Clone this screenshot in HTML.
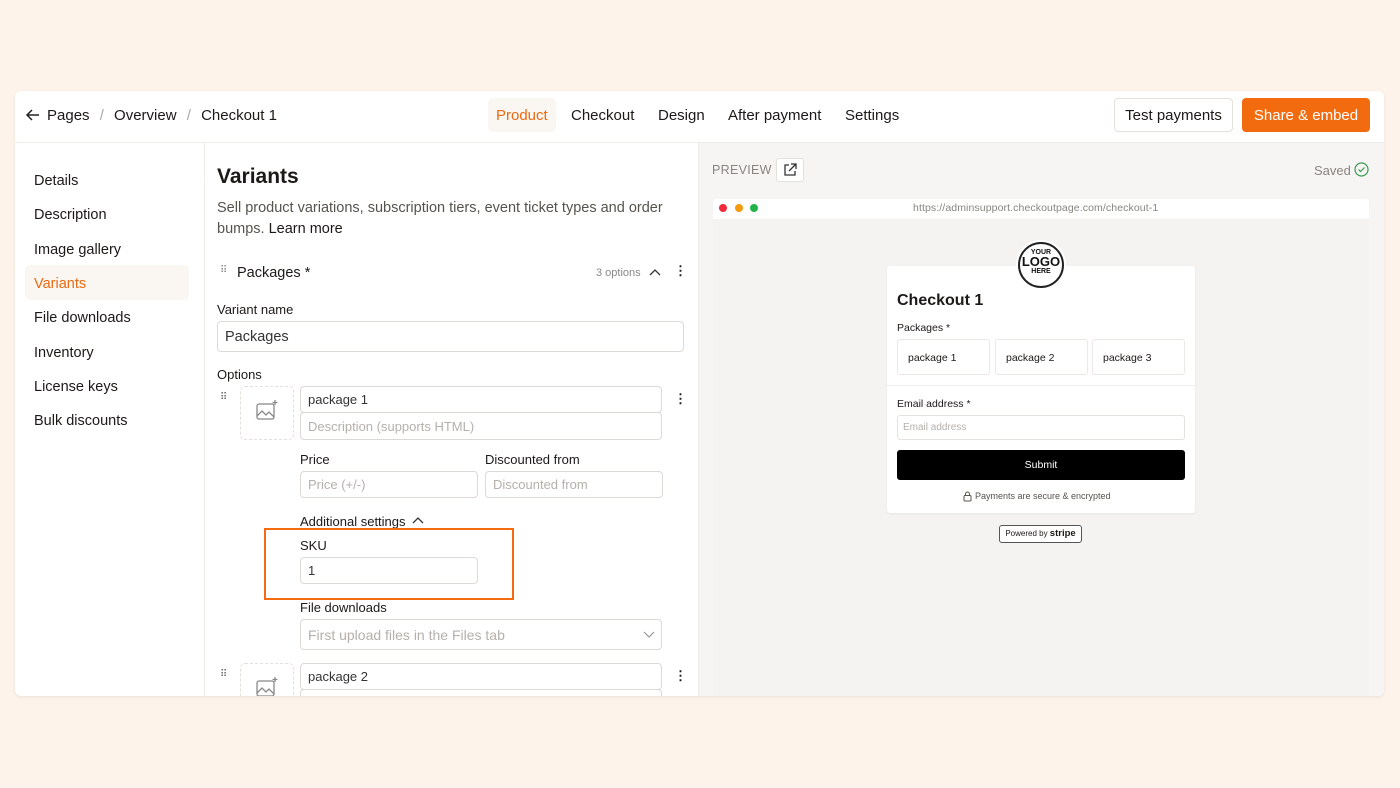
<!DOCTYPE html>
<html><head><meta charset="utf-8"><style>
*{box-sizing:border-box;margin:0;padding:0}
body{width:1400px;height:788px;background:#fdf3ea;font-family:"Liberation Sans",sans-serif;color:#1c1917;position:relative;overflow:hidden}
.a{position:absolute}
.card{left:15px;top:91px;width:1369px;height:605px;background:#fff;border-radius:6px;overflow:hidden;box-shadow:0 1px 3px rgba(0,0,0,.08)}
.t15{font-size:15px}
.inp{position:absolute;border:1px solid #ddd9d6;border-radius:4px;background:#fff;font-size:13px;color:#b5b0ac;padding-left:7px;display:flex;align-items:center}
.lbl{position:absolute;font-size:13px;color:#1c1917}
.side div{position:absolute;left:19px;font-size:14.5px}
</style></head><body>
<div class="a card">
 <div class="a" style="left:0;top:0;width:1369px;height:52px;border-bottom:1px solid #efece9"></div>
 <svg class="a" style="left:10px;top:16px" width="16" height="16" viewBox="0 0 16 16"><path d="M14 8H2M7 3L2 8l5 5" stroke="#222" stroke-width="1.5" fill="none"/></svg>
 <div class="a t15" style="left:32px;top:16px">Pages <span style="color:#aaa;margin:0 6px">/</span> Overview <span style="color:#aaa;margin:0 6px">/</span> Checkout 1</div>
 <div class="a" style="left:473px;top:7px;width:68px;height:34px;background:#faf6f2;border-radius:5px"></div>
 <div class="a t15" style="left:481px;top:16px;color:#ea6a12">Product</div>
 <div class="a t15" style="left:556px;top:16px">Checkout</div>
 <div class="a t15" style="left:643px;top:16px">Design</div>
 <div class="a t15" style="left:713px;top:16px">After payment</div>
 <div class="a t15" style="left:830px;top:16px">Settings</div>
 <div class="a t15" style="left:1099px;top:7px;width:119px;height:34px;border:1px solid #e5e1dd;border-radius:4px;text-align:center;line-height:34px">Test payments</div>
 <div class="a t15" style="left:1227px;top:7px;width:128px;height:34px;background:#f26b0f;color:#fff;border-radius:4px;text-align:center;line-height:36px">Share &amp; embed</div>
 <div class="a" style="left:189px;top:52px;width:1px;height:553px;background:#efece9"></div>
 <div class="a" style="left:10px;top:174px;width:164px;height:35px;background:#faf6f2;border-radius:5px"></div>
 <div class="side">
  <div style="top:82px">Details</div><div style="top:116px">Description</div><div style="top:151px">Image gallery</div>
  <div style="top:185px;color:#ea6a12">Variants</div><div style="top:219px">File downloads</div><div style="top:254px">Inventory</div>
  <div style="top:288px">License keys</div><div style="top:322px">Bulk discounts</div>
 </div>
 <div class="a" style="left:202px;top:74px;font-size:21px;font-weight:bold">Variants</div>
 <div class="a" style="left:202px;top:107px;width:470px;font-size:14.5px;line-height:21px;color:#57534e">Sell product variations, subscription tiers, event ticket types and order bumps. <span style="color:#1c1917">Learn more</span></div>
 <div class="a" style="left:205px;top:174px;font-size:10px;color:#888;letter-spacing:-1px">⠿</div>
 <div class="a" style="left:222px;top:174px;font-size:14.5px">Packages *</div>
 <div class="a" style="left:581px;top:176px;font-size:11px;color:#888">3 options</div>
 <svg class="a" style="left:634px;top:176px" width="12" height="10"><path d="M1 8l5-5 5 5" stroke="#333" stroke-width="1.3" fill="none"/></svg>
 <div class="a" style="left:659px;top:172px;font-size:13px;font-weight:bold">⋮</div>
 <div class="lbl" style="left:202px;top:211px">Variant name</div>
 <div class="inp" style="left:202px;top:230px;width:467px;height:31px;color:#333;font-size:14.5px">Packages</div>
 <div class="lbl" style="left:202px;top:276px">Options</div>
 <div class="a" style="left:205px;top:301px;font-size:10px;color:#666">⠿</div>
 <div class="a" style="left:225px;top:295px;width:54px;height:54px;border:1px dashed #e3dfdb;border-radius:5px"></div>
 <svg class="a" style="left:240px;top:308px" width="24" height="24" viewBox="0 0 24 24"><rect x="2" y="5" width="17" height="15" rx="2" stroke="#888" fill="none" stroke-width="1.3"/><path d="M2 17l5-5 4 4 3-3 5 5" stroke="#888" fill="none" stroke-width="1.3"/><path d="M20 1v5M17.5 3.5h5" stroke="#888" stroke-width="1.3"/></svg>
 <div class="inp" style="left:285px;top:295px;width:362px;height:27px;color:#333">package 1</div>
 <div class="inp" style="left:285px;top:321px;width:362px;height:28px">Description (supports HTML)</div>
 <div class="a" style="left:659px;top:300px;font-size:13px;font-weight:bold">⋮</div>
 <div class="lbl" style="left:285px;top:361px">Price</div>
 <div class="lbl" style="left:470px;top:361px">Discounted from</div>
 <div class="inp" style="left:285px;top:380px;width:178px;height:27px">Price (+/-)</div>
 <div class="inp" style="left:470px;top:380px;width:178px;height:27px">Discounted from</div>
 <div class="lbl" style="left:285px;top:423px">Additional settings</div>
 <svg class="a" style="left:397px;top:425px" width="12" height="10"><path d="M1 7l5-5 5 5" stroke="#333" stroke-width="1.3" fill="none"/></svg>
 <div class="a" style="left:249px;top:437px;width:250px;height:72px;border:2.5px solid #f26b0f"></div>
 <div class="lbl" style="left:285px;top:447px">SKU</div>
 <div class="inp" style="left:285px;top:466px;width:178px;height:27px;color:#333">1</div>
 <div class="lbl" style="left:285px;top:509px">File downloads</div>
 <div class="inp" style="left:285px;top:528px;width:362px;height:31px;font-size:14px">First upload files in the Files tab</div>
 <svg class="a" style="left:628px;top:538px" width="12" height="10"><path d="M1 3l5 5 5-5" stroke="#999" stroke-width="1.2" fill="none"/></svg>
 <div class="a" style="left:205px;top:578px;font-size:10px;color:#666">⠿</div>
 <div class="a" style="left:225px;top:572px;width:54px;height:54px;border:1px dashed #e3dfdb;border-radius:5px"></div>
 <svg class="a" style="left:240px;top:585px" width="24" height="24" viewBox="0 0 24 24"><rect x="2" y="5" width="17" height="15" rx="2" stroke="#888" fill="none" stroke-width="1.3"/><path d="M2 17l5-5 4 4 3-3 5 5" stroke="#888" fill="none" stroke-width="1.3"/><path d="M20 1v5M17.5 3.5h5" stroke="#888" stroke-width="1.3"/></svg>
 <div class="inp" style="left:285px;top:572px;width:362px;height:27px;color:#333">package 2</div>
 <div class="inp" style="left:285px;top:598px;width:362px;height:28px"></div>
 <div class="a" style="left:659px;top:577px;font-size:13px;font-weight:bold">⋮</div>
 <div class="a" style="left:683px;top:52px;width:686px;height:553px;background:#f6f5f3;border-left:1px solid #efece9"></div>
 <div class="a" style="left:697px;top:72px;font-size:12.5px;color:#8a8580;letter-spacing:.3px">PREVIEW</div>
 <div class="a" style="left:761px;top:67px;width:28px;height:24px;border:1px solid #e3dfdb;border-radius:3px;background:#fff"></div>
 <svg class="a" style="left:768px;top:72px" width="14" height="14" viewBox="0 0 14 14"><path d="M6 2H2v10h10V8M8 1h5v5M13 1L6 8" stroke="#333" stroke-width="1.3" fill="none"/></svg>
 <div class="a" style="left:1299px;top:72px;font-size:13px;color:#8a8580">Saved</div>
 <svg class="a" style="left:1339px;top:71px" width="15" height="15"><circle cx="7.5" cy="7.5" r="6.5" stroke="#3a9a55" fill="none" stroke-width="1.2"/><path d="M4.5 7.5l2 2 4-4" stroke="#3a9a55" fill="none" stroke-width="1.2"/></svg>
 <div class="a" style="left:698px;top:108px;width:656px;height:20px;background:#fff;border-radius:3px 3px 0 0"></div>
 <div class="a" style="left:704px;top:113px;width:8px;height:8px;border-radius:50%;background:#ef2b3a"></div>
 <div class="a" style="left:720px;top:113px;width:8px;height:8px;border-radius:50%;background:#f59a0c"></div>
 <div class="a" style="left:735px;top:113px;width:8px;height:8px;border-radius:50%;background:#22b24a"></div>
 <div class="a" style="left:898px;top:111px;font-size:10.5px;color:#8a8580;letter-spacing:.1px">https://adminsupport.checkoutpage.com/checkout-1</div>
 <div class="a" style="left:698px;top:128px;width:656px;height:477px;background:#f4f3f1"></div>
 <div class="a" style="left:872px;top:175px;width:308px;height:247px;background:#fff;border-radius:3px;box-shadow:0 1px 2px rgba(0,0,0,.06)"></div>
 <div class="a" style="left:1003px;top:151px;width:46px;height:46px;border-radius:50%;background:#fff;border:2px solid #222;box-shadow:0 0 0 2px #fff;text-align:center;font-weight:bold;color:#111">
  <div style="font-size:7px;margin-top:5px">YOUR</div><div style="font-size:13px;line-height:12px">LOGO</div><div style="font-size:7px">HERE</div></div>
 <div class="a" style="left:882px;top:201px;font-size:16px;font-weight:bold">Checkout 1</div>
 <div class="a" style="left:882px;top:231px;font-size:10.5px">Packages *</div>
 <div class="a" style="left:882px;top:248px;width:93px;height:36px;border:1px solid #ebe8e5;border-radius:3px;font-size:10.5px;padding:12px 0 0 10px">package 1</div>
 <div class="a" style="left:980px;top:248px;width:93px;height:36px;border:1px solid #ebe8e5;border-radius:3px;font-size:10.5px;padding:12px 0 0 10px">package 2</div>
 <div class="a" style="left:1077px;top:248px;width:93px;height:36px;border:1px solid #ebe8e5;border-radius:3px;font-size:10.5px;padding:12px 0 0 10px">package 3</div>
 <div class="a" style="left:872px;top:294px;width:308px;height:1px;background:#f0eeec"></div>
 <div class="a" style="left:882px;top:307px;font-size:10.5px">Email address *</div>
 <div class="a" style="left:882px;top:324px;width:288px;height:25px;border:1px solid #e5e1dd;border-radius:3px;font-size:10px;color:#b5b0ac;padding:6px 0 0 5px">Email address</div>
 <div class="a" style="left:882px;top:359px;width:288px;height:30px;background:#000;border-radius:3px;color:#fff;font-size:10.5px;text-align:center;line-height:30px">Submit</div>
 <svg class="a" style="left:948px;top:400px" width="9" height="11"><rect x="1" y="4.5" width="7" height="5.5" rx="1" stroke="#57534e" fill="none"/><path d="M2.5 4.5V3a2 2 0 0 1 4 0v1.5" stroke="#57534e" fill="none"/></svg>
 <div class="a" style="left:960px;top:400px;font-size:9px;color:#57534e">Payments are secure &amp; encrypted</div>
 <div class="a" style="left:984px;top:434px;width:83px;height:18px;border:1px solid #555;border-radius:3px;background:#fff;font-size:8px;text-align:center;line-height:16px">Powered by <b style="font-size:9.5px">stripe</b></div>
</div>
</body></html>
